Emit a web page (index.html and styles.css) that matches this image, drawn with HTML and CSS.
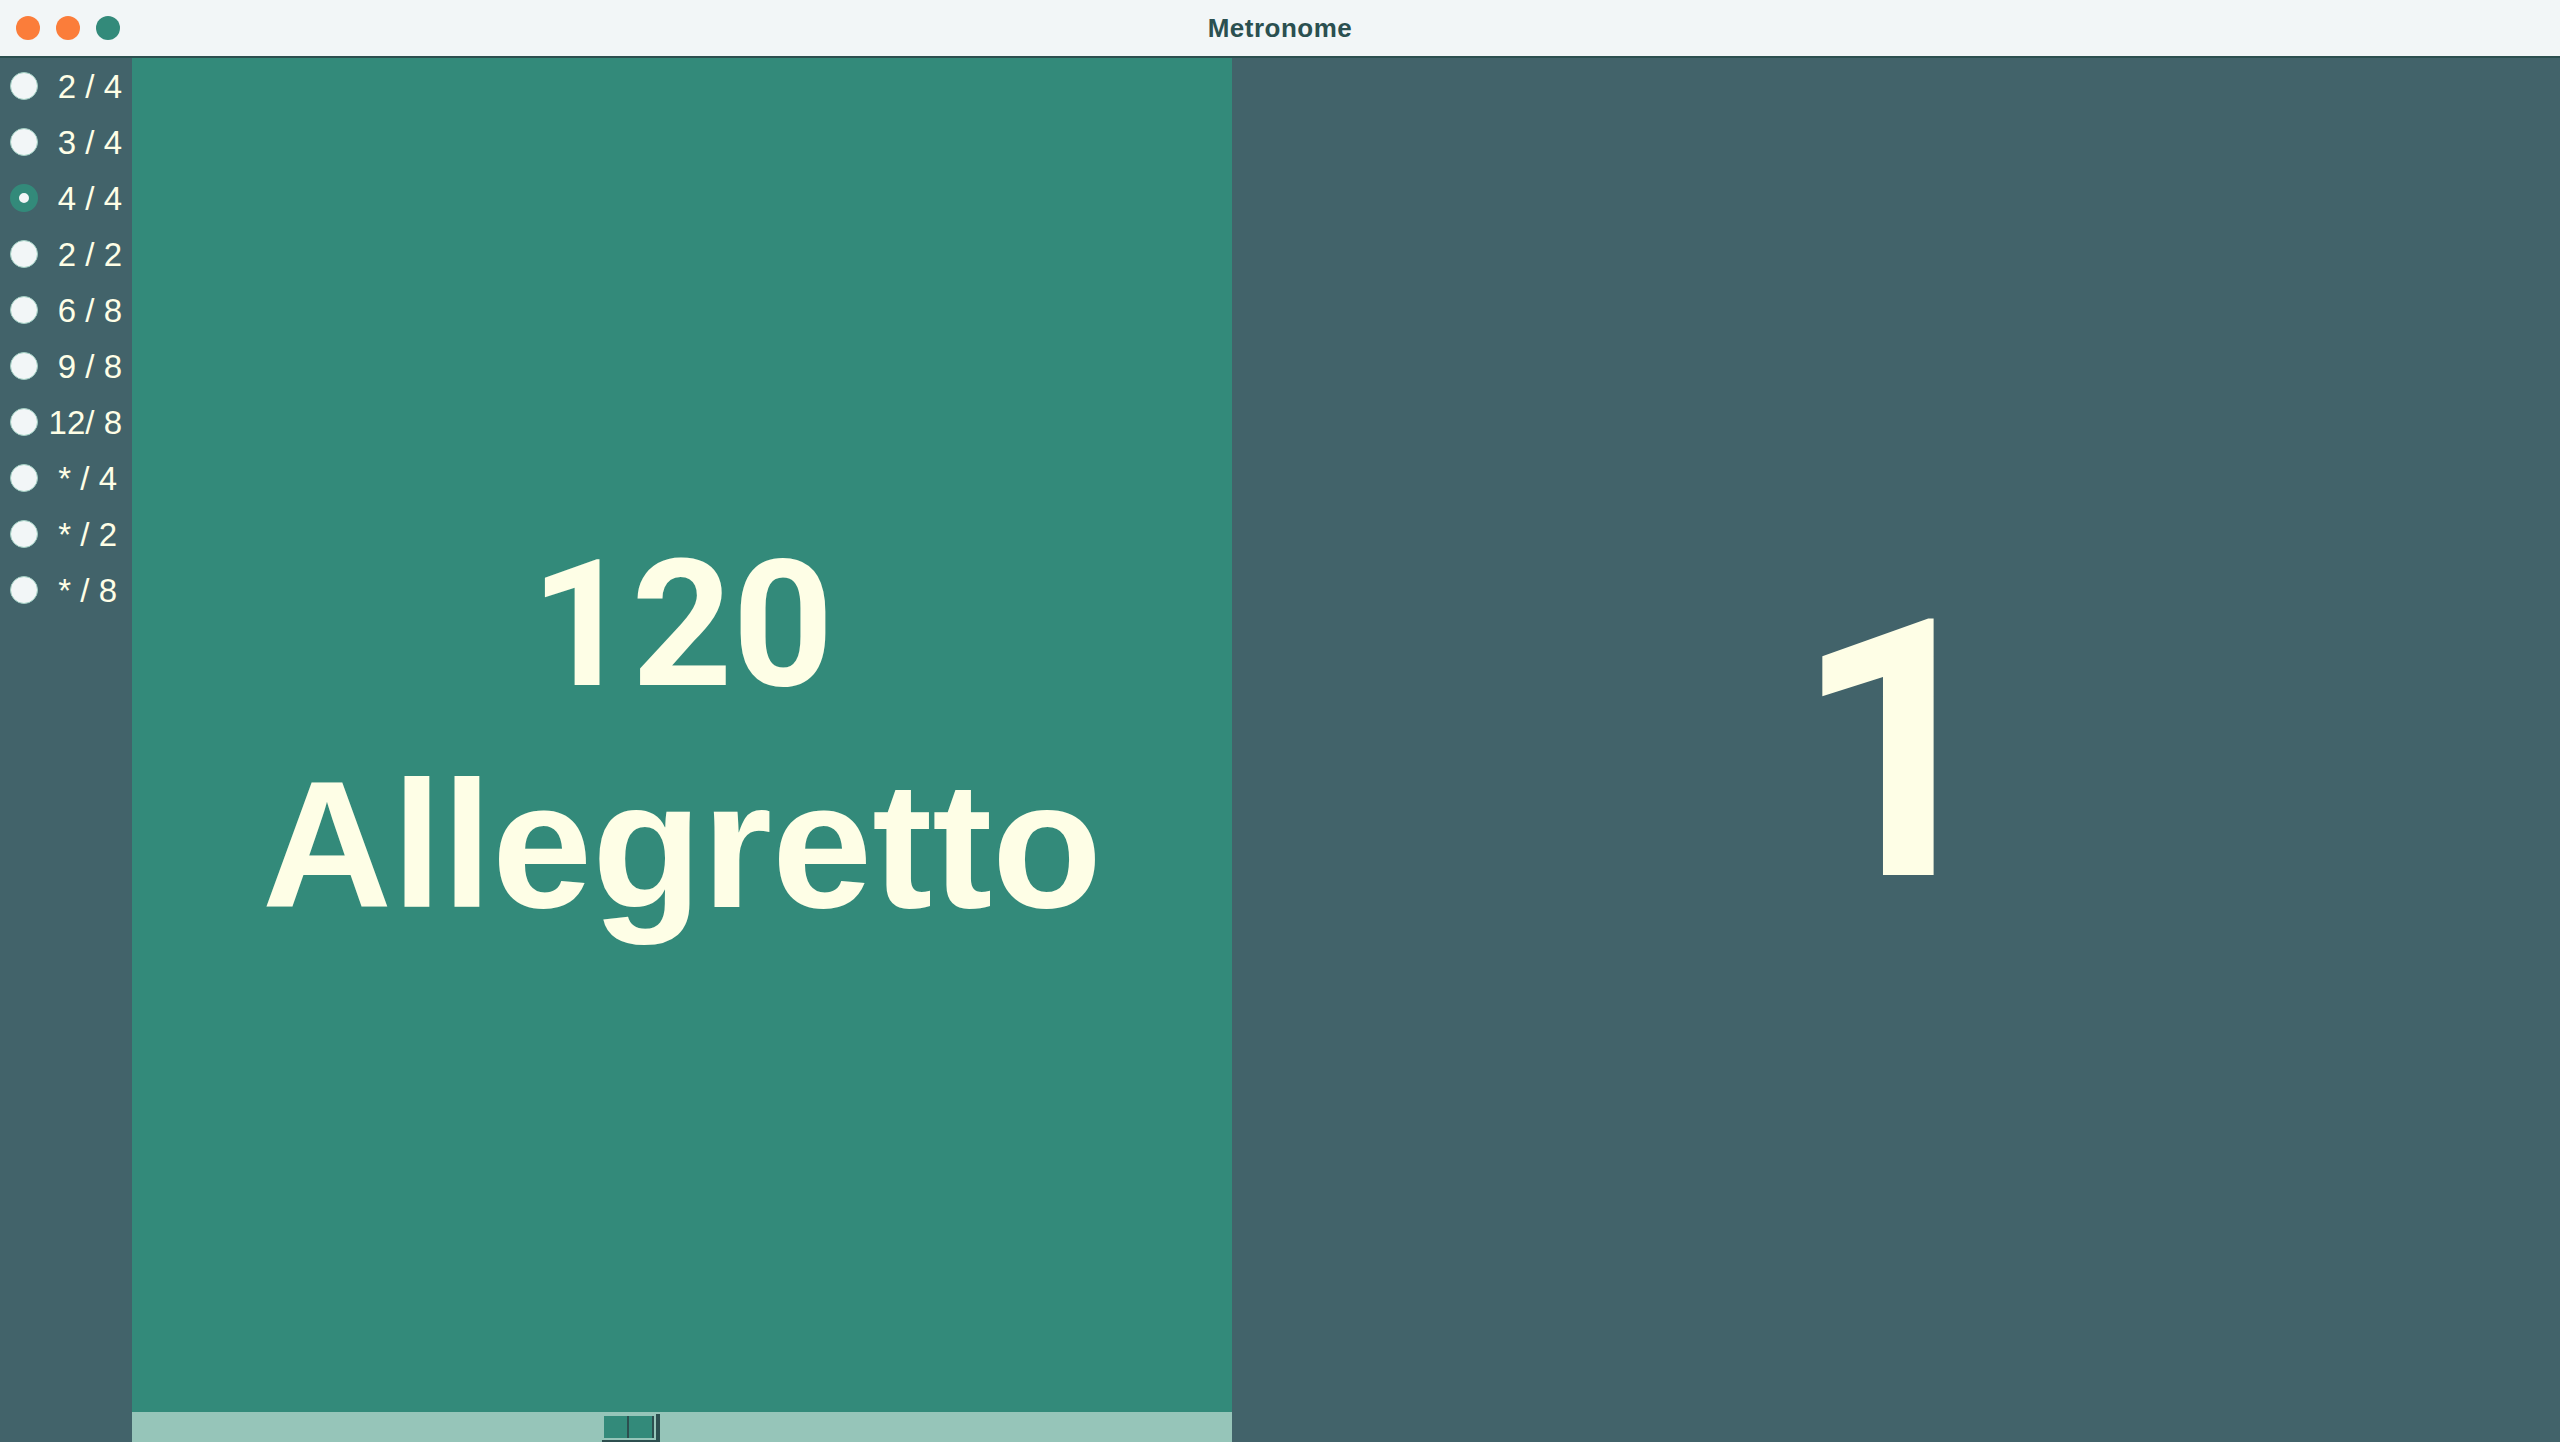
FILE: index.html
```html
<!DOCTYPE html>
<html>
<head>
<meta charset="utf-8">
<title>Metronome</title>
<link rel="stylesheet" href="styles.css">
</head>
<body>
<div class="window">
  <header class="titlebar">
    <div class="lights">
      <span class="light orange"></span>
      <span class="light orange"></span>
      <span class="light teal"></span>
    </div>
    <div class="title">Metronome</div>
  </header>
  <main class="main">
    <nav class="sidebar">
      <label class="row"><span class="radio"></span><span class="lbl">2 / 4</span></label>
      <label class="row"><span class="radio"></span><span class="lbl">3 / 4</span></label>
      <label class="row"><span class="radio checked"></span><span class="lbl">4 / 4</span></label>
      <label class="row"><span class="radio"></span><span class="lbl">2 / 2</span></label>
      <label class="row"><span class="radio"></span><span class="lbl">6 / 8</span></label>
      <label class="row"><span class="radio"></span><span class="lbl">9 / 8</span></label>
      <label class="row"><span class="radio"></span><span class="lbl">12/ 8</span></label>
      <label class="row"><span class="radio"></span><span class="lbl star">* / 4</span></label>
      <label class="row"><span class="radio"></span><span class="lbl star">* / 2</span></label>
      <label class="row"><span class="radio"></span><span class="lbl star">* / 8</span></label>
    </nav>
    <section class="tempo">
      <div class="tempo-text">
        <div class="line bpm">120</div>
        <div class="line">Allegretto</div>
      </div>
      <div class="bar">
        <div class="handle">
          <span class="sq"></span>
          <span class="sq"></span>
        </div>
      </div>
    </section>
    <section class="beat">
      <div class="beat-num">1</div>
    </section>
  </main>
</div>
</body>
</html>
```

FILE: styles.css
```css
html, body {
  margin: 0;
  padding: 0;
  background: #ffffff;
}
body {
  font-family: "Liberation Sans", Arial, sans-serif;
}
.window {
  width: 2560px;
  height: 1442px;
  display: flex;
  flex-direction: column;
  overflow: hidden;
}
.titlebar {
  height: 56px;
  flex: 0 0 56px;
  background: #f2f6f7;
  border-bottom: 2px solid #2c4f4f;
  position: relative;
  display: flex;
  align-items: center;
  justify-content: center;
}
.lights {
  position: absolute;
  left: 16px;
  top: 16px;
  display: flex;
  gap: 16px;
}
.light {
  width: 24px;
  height: 24px;
  border-radius: 50%;
  display: block;
}
.light.orange { background: #fb7d3a; }
.light.teal { background: #338a7a; }
.title {
  font-size: 26px;
  font-weight: bold;
  color: #2b5050;
  letter-spacing: 0.5px;
}
.main {
  flex: 1;
  display: flex;
  min-height: 0;
}
.sidebar {
  width: 132px;
  flex: 0 0 132px;
  background: #42636a;
  display: flex;
  flex-direction: column;
}
.row {
  height: 56px;
  flex: 0 0 56px;
  display: flex;
  align-items: center;
  position: relative;
}
.radio {
  position: absolute;
  left: 10px;
  top: 14px;
  width: 28px;
  height: 28px;
  box-sizing: border-box;
  border-radius: 50%;
  background: #f2f6f7;
  border: 1px solid #9fcdc1;
}
.radio.checked {
  background: #f2f6f7;
  border: 9px solid #338a7a;
}
.lbl {
  position: absolute;
  right: 10px;
  top: 11px;
  font-size: 33px;
  line-height: 36px;
  color: #fefee6;
  white-space: pre;
}
.lbl.star {
  right: 15px;
}
.tempo {
  width: 1100px;
  flex: 0 0 1100px;
  background: #338a7a;
  display: flex;
  flex-direction: column;
}
.tempo-text {
  flex: 1;
  display: flex;
  flex-direction: column;
  align-items: center;
  justify-content: center;
  color: #fefee6;
  font-weight: bold;
  font-size: 180px;
  line-height: 220px;
}
.line {
  white-space: nowrap;
}
.bpm {
  font-family: Roboto, "Liberation Sans", sans-serif;
  font-size: 176px;
}
.bar {
  height: 30px;
  flex: 0 0 30px;
  background: #96c5b9;
  position: relative;
}
.handle {
  position: absolute;
  left: 470px;
  top: 2px;
  width: 58px;
  height: 28px;
  display: flex;
  gap: 2px;
  padding: 2px 4px 2px 2px;
  box-sizing: border-box;
  border-bottom: 2px solid #2c4f4f;
  border-right: 4px solid #2c4f4f;
}
.sq {
  display: block;
  width: 24px;
  height: 22px;
  background: #338a7a;
  box-shadow: 2px 0 0 #2c4f4f;
}
.beat {
  flex: 1;
  background: #42636a;
  display: flex;
  align-items: center;
  justify-content: center;
}
.beat-num {
  color: #fefee6;
  font-family: Roboto, "Liberation Sans", sans-serif;
  font-weight: bold;
  font-size: 360px;
  line-height: 1;
  margin-top: 4px;
}
```
